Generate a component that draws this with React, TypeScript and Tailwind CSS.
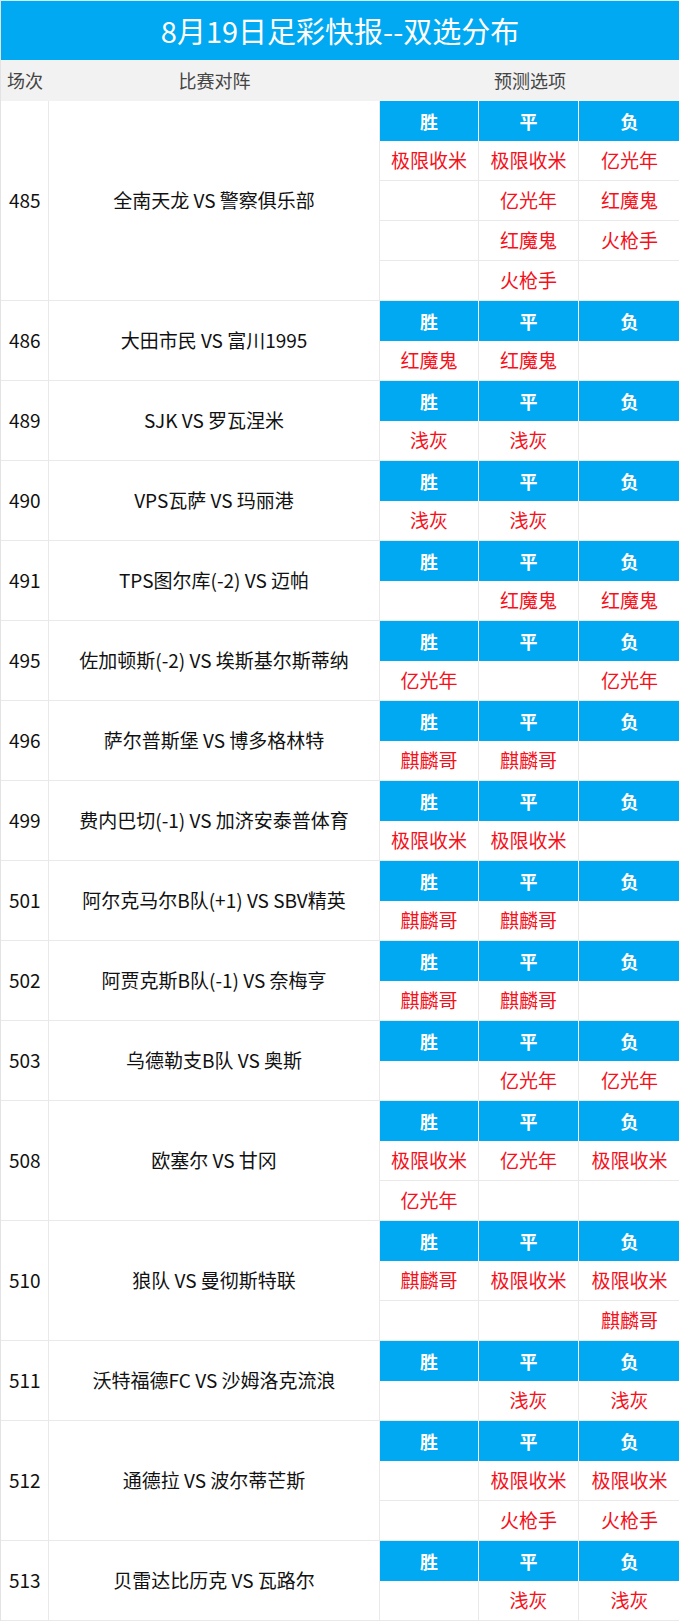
import React from "react";

type Match = {
  no: string;
  teams: string;
  win: string[];
  draw: string[];
  lose: string[];
};

const MATCHES: Match[] = [
  { no: "485", teams: "全南天龙 VS 警察俱乐部", win: ["极限收米"], draw: ["极限收米", "亿光年", "红魔鬼", "火枪手"], lose: ["亿光年", "红魔鬼", "火枪手"] },
  { no: "486", teams: "大田市民 VS 富川1995", win: ["红魔鬼"], draw: ["红魔鬼"], lose: [] },
  { no: "489", teams: "SJK VS 罗瓦涅米", win: ["浅灰"], draw: ["浅灰"], lose: [] },
  { no: "490", teams: "VPS瓦萨 VS 玛丽港", win: ["浅灰"], draw: ["浅灰"], lose: [] },
  { no: "491", teams: "TPS图尔库(-2) VS 迈帕", win: [], draw: ["红魔鬼"], lose: ["红魔鬼"] },
  { no: "495", teams: "佐加顿斯(-2) VS 埃斯基尔斯蒂纳", win: ["亿光年"], draw: [], lose: ["亿光年"] },
  { no: "496", teams: "萨尔普斯堡 VS 博多格林特", win: ["麒麟哥"], draw: ["麒麟哥"], lose: [] },
  { no: "499", teams: "费内巴切(-1) VS 加济安泰普体育", win: ["极限收米"], draw: ["极限收米"], lose: [] },
  { no: "501", teams: "阿尔克马尔B队(+1) VS SBV精英", win: ["麒麟哥"], draw: ["麒麟哥"], lose: [] },
  { no: "502", teams: "阿贾克斯B队(-1) VS 奈梅亨", win: ["麒麟哥"], draw: ["麒麟哥"], lose: [] },
  { no: "503", teams: "乌德勒支B队 VS 奥斯", win: [], draw: ["亿光年"], lose: ["亿光年"] },
  { no: "508", teams: "欧塞尔 VS 甘冈", win: ["极限收米", "亿光年"], draw: ["亿光年"], lose: ["极限收米"] },
  { no: "510", teams: "狼队 VS 曼彻斯特联", win: ["麒麟哥"], draw: ["极限收米"], lose: ["极限收米", "麒麟哥"] },
  { no: "511", teams: "沃特福德FC VS 沙姆洛克流浪", win: [], draw: ["浅灰"], lose: ["浅灰"] },
  { no: "512", teams: "通德拉 VS 波尔蒂芒斯", win: [], draw: ["极限收米", "火枪手"], lose: ["极限收米", "火枪手"] },
  { no: "513", teams: "贝雷达比历克 VS 瓦路尔", win: [], draw: ["浅灰"], lose: ["浅灰"] },
];

const FONT = { fontFamily: '"Noto Sans CJK SC", "Noto Sans", sans-serif' };

function MatchBlock({ m }: { m: Match }) {
  const rows = Math.max(m.win.length, m.draw.length, m.lose.length, 1);
  const idx = Array.from({ length: rows }, (_, i) => i);
  return (
    <div className="flex">
      <div className="flex w-[48px] shrink-0 items-center border-r border-b border-[#e9e9e9] pl-[8px] text-[19px] text-[#111]">
        {m.no}
      </div>
      <div className="flex w-[331px] shrink-0 items-center justify-center border-r border-b border-[#e9e9e9] text-[19px] text-[#111]">
        {m.teams}
      </div>
      <div className="flex w-[300px] shrink-0 flex-col">
        <div className="grid h-[40px] grid-cols-[99px_100px_101px] bg-[#00a9f1] text-[18px] font-bold text-white">
          <div className="flex items-center justify-center border-r border-white">胜</div>
          <div className="flex items-center justify-center border-r border-white">平</div>
          <div className="flex items-center justify-center">负</div>
        </div>
        {idx.map((i) => (
          <div
            key={i}
            className="grid h-[40px] grid-cols-[99px_100px_101px] border-b border-[#e9e9e9] text-[19px] text-[#f5101a]"
          >
            <div className="flex items-center justify-center border-r border-[#e9e9e9]">{m.win[i] ?? ""}</div>
            <div className="flex items-center justify-center border-r border-[#e9e9e9]">{m.draw[i] ?? ""}</div>
            <div className="flex items-center justify-center">{m.lose[i] ?? ""}</div>
          </div>
        ))}
      </div>
    </div>
  );
}

export default function App() {
  return (
    <div className="w-[679px] border-l border-[#e3e3e3] bg-white" style={FONT}>
      <div className="flex h-[60px] items-center justify-center border-t border-[#cfeefc] bg-[#00a9f1] text-[29px] text-white">
        8月19日足彩快报--双选分布
      </div>
      <div className="flex h-[41px] items-center bg-[#f2f2f2] text-[18px] text-[#444]">
        <div className="w-[48px] shrink-0 pl-[6px]">场次</div>
        <div className="w-[331px] shrink-0 text-center">比赛对阵</div>
        <div className="w-[300px] shrink-0 text-center">预测选项</div>
      </div>
      {MATCHES.map((m) => (
        <MatchBlock key={m.no} m={m} />
      ))}
    </div>
  );
}
